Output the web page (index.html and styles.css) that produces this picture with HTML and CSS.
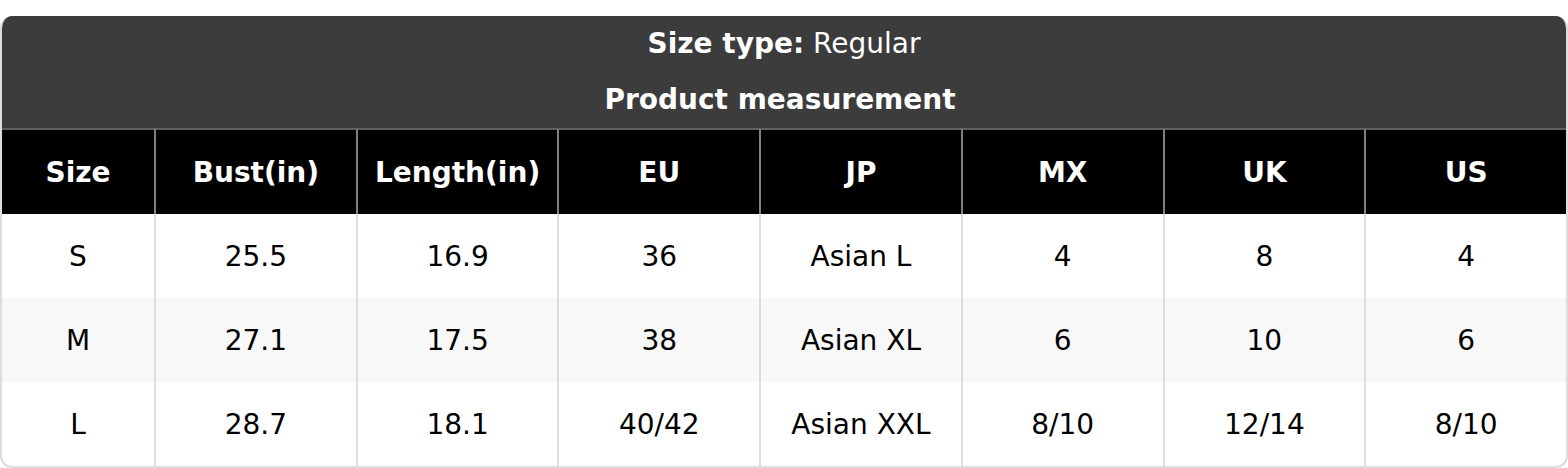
FILE: index.html
```html
<!DOCTYPE html>
<html>
<head>
<meta charset="utf-8">
<link rel="stylesheet" href="styles.css">
</head>
<body>
<div class="chart">
  <div class="caption">
    <div class="caption-line"><b>Size type:</b> Regular</div>
    <div class="caption-line second"><b>Product measurement</b></div>
  </div>
  <table class="sizes">
    <colgroup>
      <col class="c-size">
      <col><col><col><col><col><col><col>
    </colgroup>
    <thead>
      <tr><th>Size</th><th>Bust(in)</th><th>Length(in)</th><th>EU</th><th>JP</th><th>MX</th><th>UK</th><th>US</th></tr>
    </thead>
    <tbody>
      <tr><td>S</td><td>25.5</td><td>16.9</td><td>36</td><td>Asian L</td><td>4</td><td>8</td><td>4</td></tr>
      <tr class="alt"><td>M</td><td>27.1</td><td>17.5</td><td>38</td><td>Asian XL</td><td>6</td><td>10</td><td>6</td></tr>
      <tr><td>L</td><td>28.7</td><td>18.1</td><td>40/42</td><td>Asian XXL</td><td>8/10</td><td>12/14</td><td>8/10</td></tr>
    </tbody>
  </table>
</div>
</body>
</html>
```

FILE: styles.css
```css
html, body {
  margin: 0;
  padding: 0;
  background: #ffffff;
}
body {
  padding-top: 16px;
  font-family: "DejaVu Sans", Verdana, sans-serif;
  font-size: 28px;
  color: #000;
}
.chart {
  width: 1568px;
  box-sizing: border-box;
  border: 2px solid #dddddd;
  border-top: none;
  border-radius: 12px;
  overflow: hidden;
  background: #fff;
}
.caption {
  background: #3c3c3c;
  color: #ffffff;
  text-align: center;
  margin: 0 -2px;
}
.caption-line {
  height: 56px;
  line-height: 56px;
}
.caption-line.second {
  padding-right: 8px;
}
.caption-line b {
  font-weight: bold;
}
.sizes {
  width: 100%;
  border-collapse: separate;
  border-spacing: 0;
  table-layout: fixed;
}
.c-size {
  width: 152px;
}
.sizes th {
  background: #000;
  color: #fff;
  font-weight: bold;
  height: 84px;
  padding: 0;
  border-top: 2px solid #606060;
  border-left: 2px solid #808080;
  text-align: center;
  vertical-align: middle;
}
.sizes td {
  height: 84px;
  padding: 0;
  border-left: 2px solid #dddddd;
  text-align: center;
  vertical-align: middle;
}
.sizes th:first-child,
.sizes td:first-child {
  border-left: none;
}
.sizes tr.alt td {
  background: #f8f8f8;
}
```
